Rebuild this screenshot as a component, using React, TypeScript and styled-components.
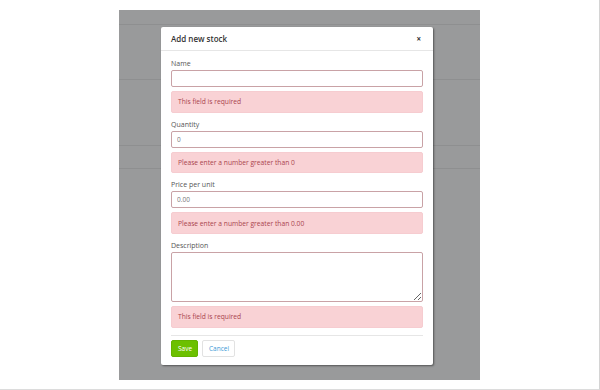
import styled, { createGlobalStyle } from 'styled-components';

const GlobalStyle = createGlobalStyle`
  html, body {
    margin: 0;
    padding: 0;
    background: #fff;
    font-family: "Open Sans", "Liberation Sans", sans-serif;
  }
  * { box-sizing: border-box; }
`;

const fields = [
  { label: 'Name', value: '', error: 'This field is required' },
  { label: 'Quantity', value: '0', error: 'Please enter a number greater than 0' },
  { label: 'Price per unit', value: '0.00', error: 'Please enter a number greater than 0.00' },
];

export default function App() {
  return (
    <>
      <GlobalStyle />
      <Page>
        <Backdrop>
          <BackRow $h={14} />
          <BackRow $h={54} />
          <BackRow $h={65} />
          <BackRow $h={22} />

          <Modal>
            <Header>
              <Title>Add new stock</Title>
              <Close>×</Close>
            </Header>
            <Body>
              {fields.map((f) => (
                <Field key={f.label}>
                  <Label>{f.label}</Label>
                  <Input defaultValue={f.value} />
                  <Alert>{f.error}</Alert>
                </Field>
              ))}
              <Field>
                <Label>Description</Label>
                <TextArea />
                <Alert>This field is required</Alert>
              </Field>
              <Footer>
                <SaveButton>Save</SaveButton>
                <CancelButton>Cancel</CancelButton>
              </Footer>
            </Body>
          </Modal>
        </Backdrop>
      </Page>
    </>
  );
}

const Page = styled.div`
  width: 600px;
  height: 390px;
  padding: 10px 0 0 119px;
  border-right: 1px solid #d4d4d4;
  border-bottom: 1px solid #dcdcdc;
`;

const Backdrop = styled.div`
  position: relative;
  width: 361px;
  height: 370px;
  background: #999a9b;
`;

const BackRow = styled.div<{ $h: number }>`
  height: ${(p) => p.$h + 1}px;
  border-bottom: 1px solid #8e8f90;
`;

const Modal = styled.div`
  position: absolute;
  left: 42px;
  top: 17px;
  width: 272px;
  height: 338px;
  background: #fff;
  border-radius: 2px;
  box-shadow: 1px 1px 2px rgba(0, 0, 0, 0.45);
`;

const Header = styled.div`
  height: 24px;
  padding: 0 10px;
  display: flex;
  align-items: center;
  justify-content: space-between;
  border-bottom: 1px solid #e6e6e6;
`;

const Title = styled.h4`
  margin: 0;
  font-size: 8px;
  font-weight: 600;
  color: #333;
`;

const Close = styled.span`
  font-size: 8px;
  font-weight: 700;
  color: #333;
  line-height: 1;
  margin-right: 2px;
`;

const Body = styled.div`
  padding: 8px 10px 0;
`;

const Field = styled.div`
  margin-bottom: 7px;
`;

const Label = styled.div`
  font-size: 7px;
  line-height: 10px;
  color: #555;
  margin-bottom: 1px;
`;

const Input = styled.input`
  display: block;
  width: 100%;
  height: 17px;
  padding: 0 5px;
  border: 1px solid #c9a2a6;
  border-radius: 2px;
  font-family: inherit;
  font-size: 6.5px;
  color: #777;
  background: #fff;
  outline: none;
`;

const TextArea = styled.textarea`
  display: block;
  width: 100%;
  height: 50px;
  padding: 3px 5px;
  border: 1px solid #c9a2a6;
  border-radius: 2px;
  font-family: inherit;
  font-size: 6.5px;
  outline: none;
  resize: vertical;
`;

const Alert = styled.div`
  margin-top: 4px;
  height: 21.7px;
  padding: 0 6px;
  display: flex;
  align-items: center;
  background: #f9d2d5;
  border: 1px solid #f6ccd0;
  border-radius: 2px;
  font-size: 6.7px;
  color: #a9444d;
`;

const Footer = styled.div`
  border-top: 1px solid #e6e6e6;
  padding-top: 4px;
  display: flex;
  gap: 4px;
`;

const BaseButton = styled.button`
  height: 17px;
  padding: 0 6px;
  border-radius: 2px;
  font-family: inherit;
  font-size: 6.5px;
  cursor: pointer;
`;

const SaveButton = styled(BaseButton)`
  width: 27px;
  background: #6cc000;
  border: 1px solid #64b300;
  color: #fff;
`;

const CancelButton = styled(BaseButton)`
  width: 33px;
  background: #fff;
  border: 1px solid #e2e2e2;
  color: #3d9ad6;
`;
